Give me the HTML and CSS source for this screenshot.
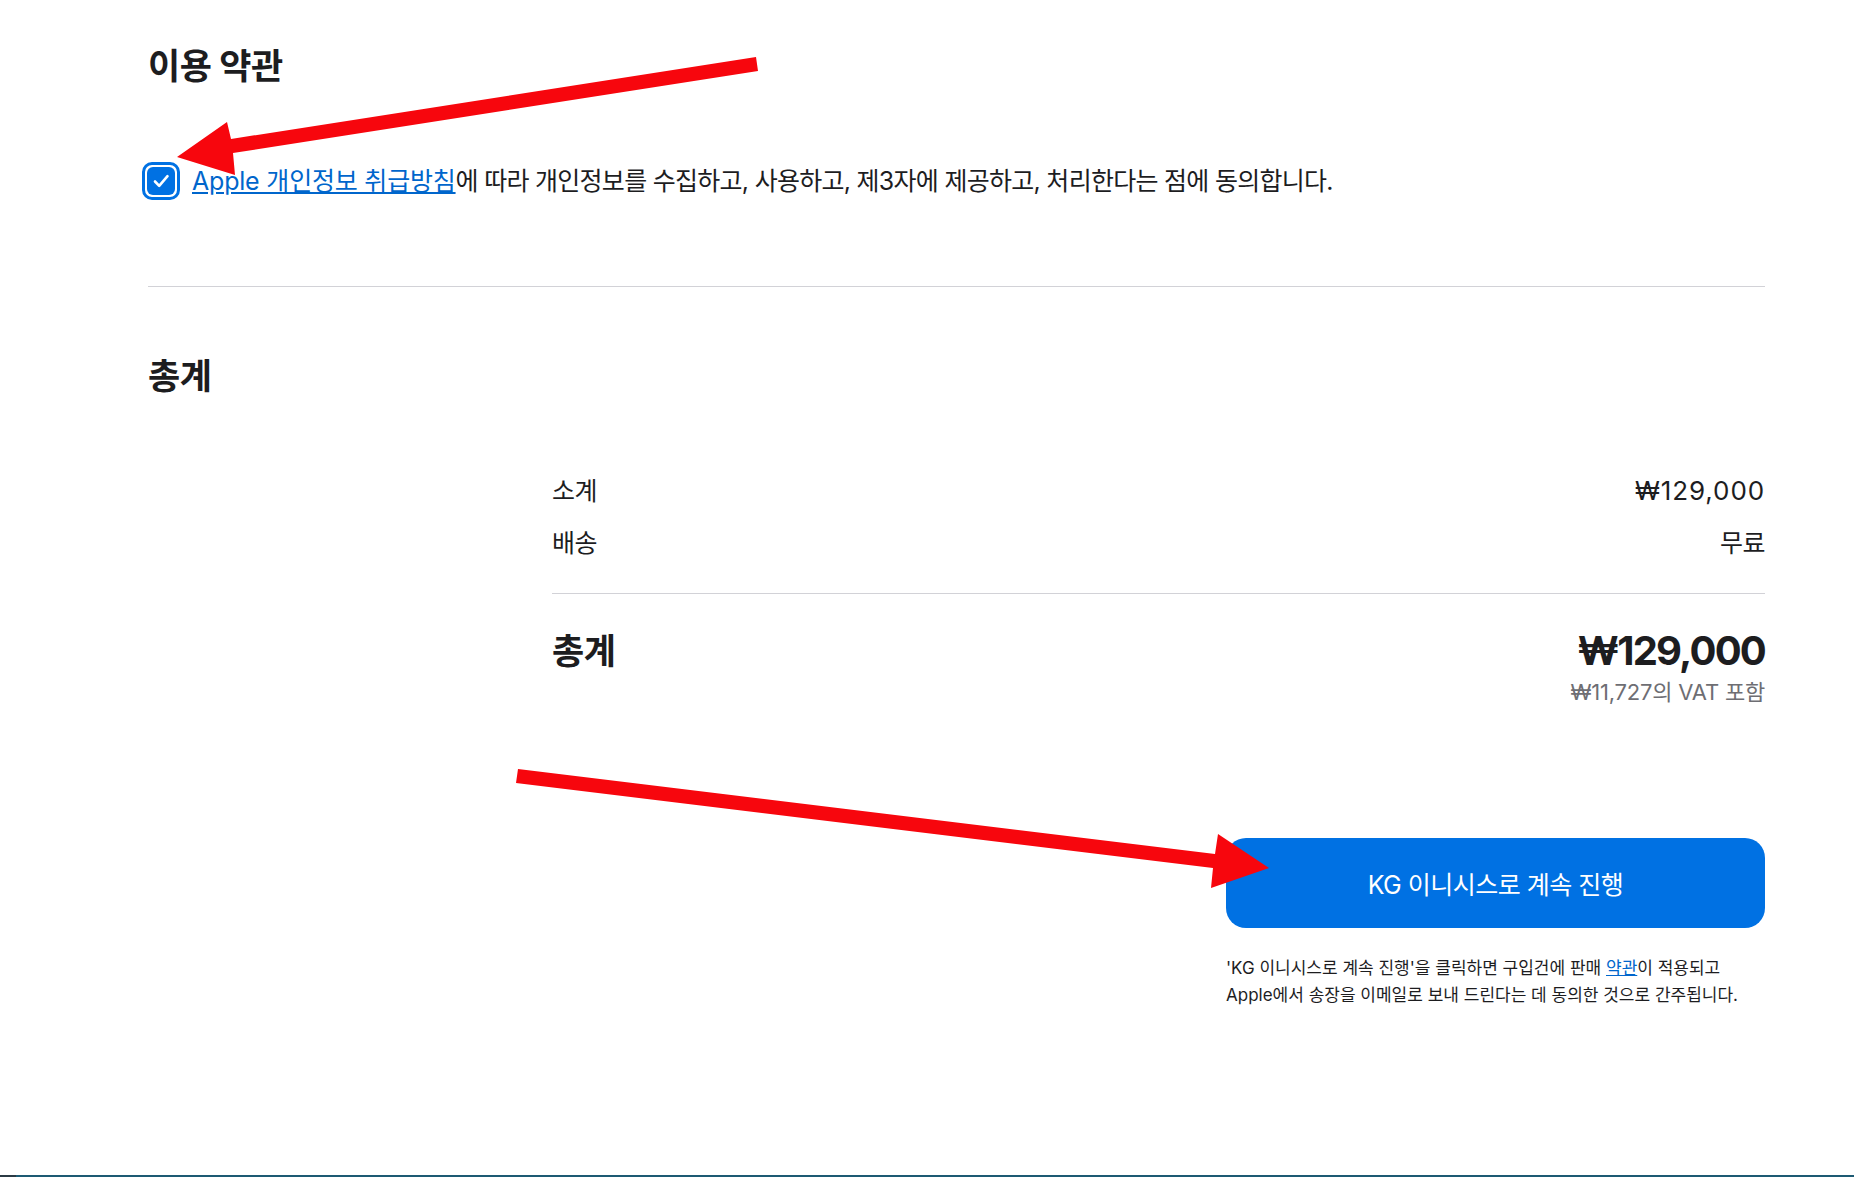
FILE: index.html
```html
<!DOCTYPE html>
<html lang="ko">
<head>
  <meta charset="utf-8">
  <link rel="stylesheet" href="styles.css">
</head>
<body>
  <div class="page">
    <section class="terms">
      <h2 class="section-title">이용 약관</h2>
      <label class="consent">
        <span class="checkbox">
          <span class="checkbox-box">
            <svg width="28" height="28" viewBox="0 0 28 28"><path d="M8 14.5 L12.2 18.8 L20.5 9.2" fill="none" stroke="#fff" stroke-width="2.6" stroke-linecap="round" stroke-linejoin="round"/></svg>
          </span>
        </span>
        <span class="consent-text"><a href="#">Apple 개인정보 취급방침</a>에 따라 개인정보를 수집하고, 사용하고, 제3자에 제공하고, 처리한다는 점에 동의합니다.</span>
      </label>
    </section>

    <section class="summary">
      <h2 class="section-title">총계</h2>
      <div class="summary-body">
        <div class="summary-lines">
          <div class="line"><span>소계</span><span class="amount">₩129,000</span></div>
          <div class="line"><span>배송</span><span>무료</span></div>
        </div>
        <div class="total">
          <span class="total-label">총계</span>
          <div class="total-value">
            <div class="total-price">₩129,000</div>
            <div class="vat">₩11,727의 VAT 포함</div>
          </div>
        </div>
        <div class="checkout">
          <button class="checkout-btn">KG 이니시스로 계속 진행</button>
          <p class="fineprint">'KG 이니시스로 계속 진행'을 클릭하면 구입건에 판매 <a href="#">약관</a>이 적용되고 Apple에서 송장을 이메일로 보내 드린다는 데 동의한 것으로 간주됩니다.</p>
        </div>
      </div>
    </section>
  </div>

  <!-- screenshot annotations -->
  <svg class="annotations" width="1854" height="1177" viewBox="0 0 1854 1177">
    <polygon fill="#f7060d" points="756,57 758,71 233,153 235,175 177,157 227,122 231,139"/>
    <polygon fill="#f7060d" points="518,769 1215,854 1218,834 1269,868 1211,888 1213,868 516,783"/>
  </svg>
  <div class="taskbar-edge"></div>
</body>
</html>
```

FILE: styles.css
```css
body {
  margin: 0;
  font-family: Inter, 'Noto Sans CJK KR', sans-serif;
  color: #1d1d1f;
  background: #fff;
}

a {
  color: #0066cc;
  text-decoration: underline;
}

.page {
  width: 1617px;
  margin-left: 148px;
  padding-top: 46px;
}

.section-title {
  margin: 0;
  font-size: 35px;
  line-height: 41px;
  font-weight: 700;
  letter-spacing: -0.5px;
}

.terms {
  padding-bottom: 86px;
  border-bottom: 1px solid #d2d2d7;
}

.consent {
  display: flex;
  align-items: center;
  gap: 12px;
  margin-top: 75px;
  margin-left: -6px;
}

.checkbox {
  box-sizing: border-box;
  width: 38px;
  height: 38px;
  padding: 2px;
  border: 3px solid #0071e3;
  border-radius: 10px;
  flex-shrink: 0;
}

.checkbox-box {
  display: flex;
  width: 28px;
  height: 28px;
  background: #0071e3;
  border-radius: 6px;
}

.consent-text {
  font-size: 25px;
  line-height: 36px;
  letter-spacing: -0.72px;
}

.consent-text a {
  letter-spacing: -0.2px;
}

.summary {
  padding-top: 69px;
}

.summary-body {
  margin-left: 404px;
  margin-top: 76px;
}

.summary-lines {
  display: flex;
  flex-direction: column;
  gap: 16px;
  padding-bottom: 32px;
  border-bottom: 1px solid #d2d2d7;
}

.line {
  display: flex;
  justify-content: space-between;
  font-size: 25px;
  line-height: 36px;
  letter-spacing: -0.5px;
}

.line .amount {
  font-size: 26px;
  letter-spacing: 0.9px;
}

.total {
  display: flex;
  justify-content: space-between;
  align-items: flex-start;
  padding-top: 33px;
}

.total-label {
  font-size: 35px;
  line-height: 48px;
  font-weight: 700;
  letter-spacing: -0.5px;
}

.total-value {
  text-align: right;
}

.total-price {
  font-size: 40px;
  line-height: 48px;
  font-weight: 700;
  letter-spacing: -1.8px;
}

.vat {
  margin-top: 3px;
  font-size: 22px;
  line-height: 28px;
  color: #6e6e73;
  letter-spacing: -0.2px;
}

.checkout {
  width: 539px;
  margin-left: auto;
  margin-top: 132px;
}

.checkout-btn {
  display: block;
  width: 100%;
  height: 90px;
  border: 0;
  border-radius: 20px;
  background: #0071e3;
  color: #fff;
  font-family: inherit;
  font-size: 25px;
  letter-spacing: -0.5px;
  cursor: pointer;
}

.fineprint {
  margin: 27px 0 0;
  font-size: 17px;
  line-height: 27px;
  letter-spacing: 0;
}

.fineprint a {
  color: #0066cc;
}

.annotations {
  position: absolute;
  top: 0;
  left: 0;
  pointer-events: none;
}

.taskbar-edge {
  position: fixed;
  left: 0;
  right: 0;
  bottom: 0;
  height: 2px;
  background: linear-gradient(90deg, #2b3a44 0, #2b3a44 16px, #1d5a73 16px);
}
```
